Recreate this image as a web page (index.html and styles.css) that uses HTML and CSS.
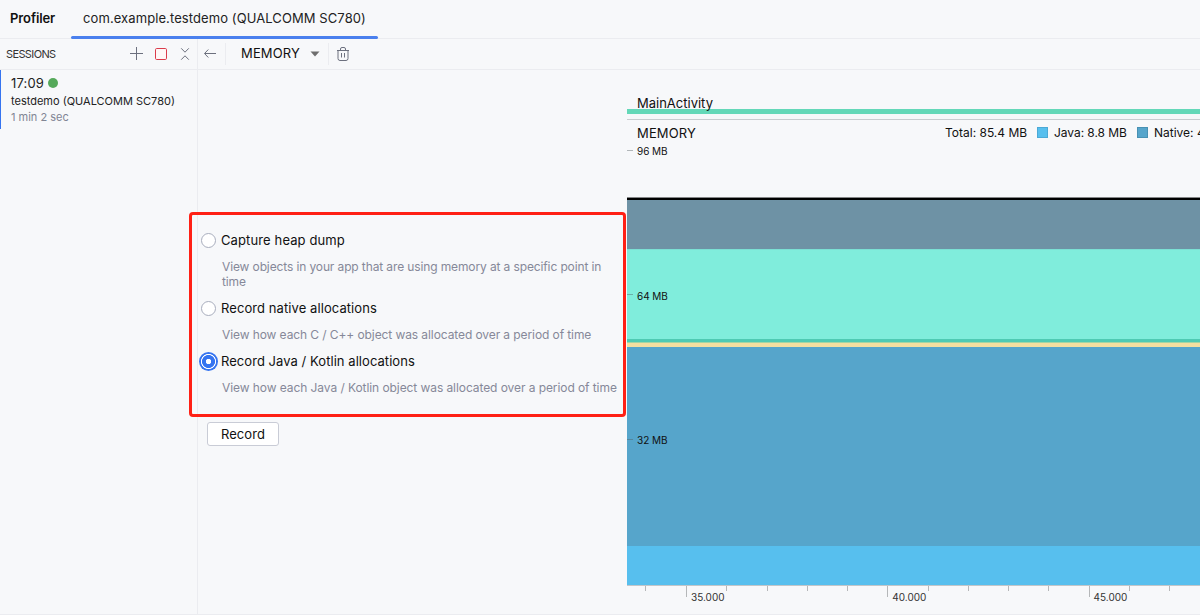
FILE: index.html
```html
<!DOCTYPE html>
<html lang="en">
<head>
<meta charset="utf-8">
<title>Profiler</title>
<link rel="stylesheet" href="styles.css">
</head>
<body>
<div class="window">
  <header class="tabs">
    <strong class="tabs-title">Profiler</strong>
    <div class="tab">com.example.testdemo (QUALCOMM SC780)</div>
  </header>
  <div class="body">
    <aside class="sidebar">
      <div class="toolbar sessions-bar">
        <span class="sessions-title">SESSIONS</span>
        <svg class="icon plus" width="16" height="16" viewBox="0 0 16 16"><path d="M8.5 1v13M2 7.500h13"/></svg>
        <svg class="icon stop" width="16" height="16" viewBox="0 0 16 16"><rect x="2.5" y="2.5" width="11" height="11" rx="1.2"/></svg>
        <svg class="icon" width="16" height="16" viewBox="0 0 16 16"><path d="M4.2 2.300L8 6.200l3.800-3.900M4.200 13.700L8 9.800l3.800 3.900"/></svg>
      </div>
      <div class="session">
        <div class="session-time">17:09<span class="live"></span></div>
        <div class="session-name">testdemo (QUALCOMM SC780)</div>
        <div class="session-length">1 min 2 sec</div>
      </div>
    </aside>
    <main class="main">
      <div class="toolbar stage-bar">
        <svg class="icon back" width="16" height="16" viewBox="0 0 16 16"><path d="M14 7.500H2.800M6.300 3.500L2.500 7.500l3.800 4"/></svg>
        <span class="divider"></span>
        <span class="stage-name">MEMORY</span>
        <svg class="caret" width="10" height="6" viewBox="0 0 10 6"><path d="M0.500 0.500h9L5 5.500z"/></svg>
        <span class="divider"></span>
        <svg class="icon trash" width="16" height="16" viewBox="0 0 16 16"><path d="M2 4.500h12M5.500 4.300V3a1.500 1.500 0 0 1 1.500-1.500h2A1.500 1.500 0 0 1 10.500 3v1.300M3 4.500v8a2 2 0 0 0 2 2h6a2 2 0 0 0 2-2v-8M6.500 7v4.500M9.500 7v4.500"/></svg>
      </div>
      <div class="stage">
        <section class="options">
          <div class="option">
            <div class="option-head"><span class="radio"></span><span class="option-name n1">Capture heap dump</span></div>
            <p class="hint h1">View objects in your app that are using memory at a specific point in<br>time</p>
          </div>
          <div class="option">
            <div class="option-head"><span class="radio"></span><span class="option-name n2">Record native allocations</span></div>
            <p class="hint h2">View how each C / C++ object was allocated over a period of time</p>
          </div>
          <div class="option">
            <div class="option-head"><span class="radio checked"></span><span class="option-name n3">Record Java / Kotlin allocations</span></div>
            <p class="hint h3">View how each Java / Kotlin object was allocated over a period of time</p>
          </div>
          <button class="record">Record</button>
          <div class="highlight"></div>
        </section>
        <section class="monitor">
          <div class="activity"><span class="activity-name">MainActivity</span></div>
          <div class="activity-line"></div>
          <div class="chart-head">
            <span class="chart-title">MEMORY</span>
            <div class="legend">
              <span class="total">Total: 85.4 MB</span>
              <span class="swatch java"></span><span class="java-text">Java: 8.8 MB</span>
              <span class="swatch native"></span><span class="native-text">Native: 4</span>
            </div>
          </div>
          <div class="chart">
            <div class="layer others"></div>
            <div class="layer code"></div>
            <div class="layer stack"></div>
            <div class="layer graphics"></div>
            <div class="layer native-heap"></div>
            <div class="layer java-heap"></div>
            <span class="level l96">96 MB</span>
            <span class="level l64">64 MB</span>
            <span class="level l32">32 MB</span>
          </div>
          <div class="axis">
            <i></i><i class="major"><span>35.000</span></i><i></i><i></i><i></i><i></i>
            <i class="major"><span>40.000</span></i><i></i><i></i><i></i><i></i>
            <i class="major"><span>45.000</span></i><i></i><i></i>
          </div>
        </section>
      </div>
    </main>
  </div>
</div>
</body>
</html>
```

FILE: styles.css
```css
* { box-sizing: border-box; }
body { margin: 0; background: #f7f8fa; color: #111; font: 13px/16px Inter, "Noto Sans", sans-serif; overflow: hidden; }
.window { width: 1200px; height: 615px; display: flex; flex-direction: column; overflow: hidden; white-space: nowrap; border-bottom: 1px solid #ebecf0; }
.tabs { height: 39px; flex: none; display: flex; border-bottom: 1px solid #ebecf0; }
.tabs-title { width: 71px; padding: 10px 0 0 10px; font-weight: 600; letter-spacing: -.1px; }
.tab { position: relative; width: 307px; height: 39px; padding: 10px 0 0 12px; color: #222; letter-spacing: .09px; }
.tab::after { content: ""; position: absolute; left: 0; bottom: 0; width: 307px; height: 3px; border-radius: 1.5px; background: #4a80ee; }
.body { flex: 1; min-height: 0; display: flex; }
.sidebar { width: 198px; border-right: 1px solid #ebecf0; }
.toolbar { height: 31px; display: flex; align-items: center; border-bottom: 1px solid #ebecf0; }
.icon { flex: none; fill: none; stroke: #6c707e; stroke-width: 1; }
.sessions-bar { gap: 8px; padding-left: 6px; }
.sessions-title { width: 114px; font-size: 11px; color: #333; letter-spacing: -.62px; }
.plus { margin-right: 1px; }
.stop { stroke: #db3b4b; fill: #fff7f7; }
.session { height: 59px; border-left: 1px solid #3574f0; padding: 5px 0 0 10px; color: #222; }
.session-time { display: flex; align-items: center; gap: 4px; letter-spacing: .15px; }
.live { width: 10px; height: 10px; border-radius: 50%; background: #55a95a; }
.session-name { margin-top: 1px; font-size: 11px; line-height: 18px; }
.session-length { margin-top: -1px; font-size: 11px; line-height: 16px; color: #818594; }
.main { flex: 1; min-width: 0; display: flex; flex-direction: column; }
.stage-bar { flex: none; padding-left: 4px; }
.divider { width: 1px; height: 22px; background: #ebecf0; }
.back { margin-right: 7px; }
.stage-name { width: 59px; margin: 0 0 2px 15px; letter-spacing: .15px; }
.caret { fill: #6e6e6e; margin: 0 8.500px 1px 9.500px; }
.trash { margin-left: 6px; }
.stage { flex: 1; min-height: 0; display: flex; }
.options { position: relative; width: 429px; padding: 161px 0 0 3px; }
.option-head { display: flex; align-items: center; height: 18px; }
.radio { width: 15px; height: 15px; margin: 0 5px 0 0; border: 1px solid #a8adbd; border-radius: 50%; background: #fff; }
.radio.checked { width: 19px; height: 19px; margin: 0 3px 0 -2px; border: 0; background: radial-gradient(circle, #fff 0 2.400px, #3574f0 3px 6.200px, #fff 6.800px 7.200px, #3574f0 7.900px); }
.n1 { letter-spacing: .12px; }
.n2 { letter-spacing: .08px; }
.n3 { letter-spacing: .05px; }
.hint { margin: 10px 0 0 21px; font-size: 12px; line-height: 15px; color: #868899; }
.h1 { letter-spacing: -.12px; }
.h2 { letter-spacing: -.09px; }
.h3 { letter-spacing: -.075px; }
.option { padding-bottom: 10px; }
.record { width: 72px; height: 24px; margin: 17px 0 0 6px; padding: 0; border: 1px solid #c9ccd6; border-radius: 3px; background: #fff; color: #111; font: inherit; letter-spacing: .1px; }
.highlight { position: absolute; left: -9px; top: 142px; width: 437px; height: 205px; border: 3px solid #ff2015; border-radius: 4px; z-index: 2; }
.monitor { flex: 1; min-width: 0; overflow: hidden; display: flex; flex-direction: column; }
.activity { height: 44px; padding: 25px 0 0 10px; border-bottom: 5px solid #64d8b8; }
.activity-name { position: relative; }
.activity-line { height: 6px; border-bottom: 1px solid #c9ccd0; }
.chart-head { height: 27px; padding: 5px 0 0 10px; display: flex; }
.chart-title { width: 308px; flex: none; letter-spacing: .15px; }
.legend { display: flex; align-items: center; flex: none; height: 16px; font-size: 12px; }
.total { width: 82px; margin-right: 10px; }
.swatch { width: 11px; height: 11px; margin: 0 6px 1px 0; border: 1px solid #4ba9d6; background: #57bfee; }
.swatch.native { background: #56a5cb; border-color: #4891b3; }
.java-text { width: 73px; margin-right: 10px; letter-spacing: -.05px; }
.chart { position: relative; height: 438px; flex: none; padding-top: 51px; display: flex; flex-direction: column; }
.layer { flex: none; }
.others { height: 51px; border-top: 2px solid #000; background: #6e92a5; box-shadow: 0 -1px 0 #858687; }
.code { height: 90px; background: #80eddc; border-top: 1px solid #7be0d4; }
.stack { height: 3px; background: #4fcab3; }
.graphics { height: 5px; background: #f4dfa0; border-top: 1px solid #a3d5a5; }
.native-heap { height: 199px; background: #56a5cb; }
.java-heap { height: 39px; background: #57bfee; }
.level { position: absolute; left: 0; height: 12px; font-size: 10px; line-height: 12px; padding-left: 10px; letter-spacing: -.05px; }
.level::before { content: ""; position: absolute; left: 0; top: 5px; width: 6px; height: 1px; background: rgba(80, 90, 95, .42); }
.l96 { top: -2px; }
.l64 { top: 143px; }
.l64::before { top: 4px; }
.l32 { top: 287px; }
.axis { border-top: 1px solid #c3c6c9; display: grid; grid-template-columns: 41px repeat(13, 40.250px); padding-left: 18px; }
.axis i { width: 1px; height: 5px; background: #b5b7b9; font-style: normal; }
.axis .major { height: 11px; }
.axis span { display: block; margin-left: 5px; padding-top: 5px; font-size: 10px; line-height: 12px; color: #333; }
```
